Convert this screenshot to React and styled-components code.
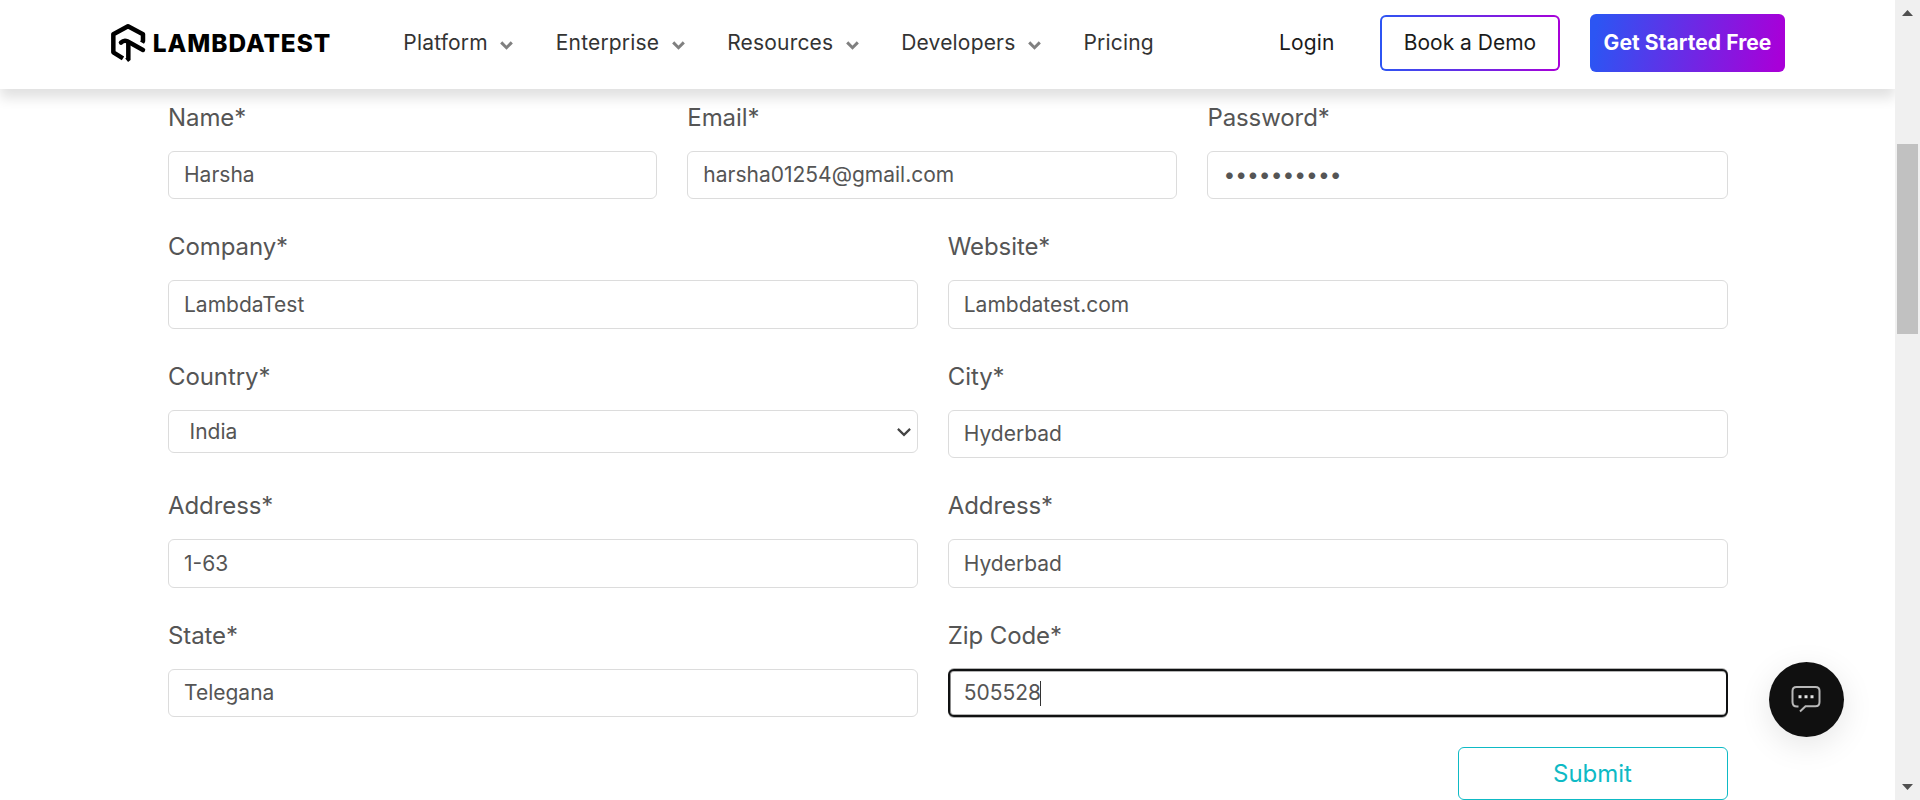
import React from 'react';
import styled, { createGlobalStyle, css } from 'styled-components';

const GlobalStyle = createGlobalStyle`
  *, *::before, *::after { box-sizing: border-box; }
  body { margin: 0; background: #fff; overflow: hidden; font-family: Inter, "Liberation Sans", sans-serif; }
`;

const Viewport = styled.div`
  display: flex;
  height: 800px;
  overflow: hidden;
`;

const Page = styled.div`
  flex: 1;
  min-width: 0;
  overflow: hidden;
  background: #fff;
`;

const Header = styled.header`
  position: relative;
  z-index: 2;
  display: flex;
  align-items: center;
  height: 89px;
  padding: 0 110px 3px 110px;
  background: #fff;
  box-shadow: 0 9px 12px rgba(0, 0, 0, 0.12);
`;

const Logo = styled.a`
  display: flex;
  align-items: center;
  width: 293.3px;
  color: #000;
`;

const LogoMark = styled.svg`
  width: 36.67px;
  height: 40px;
  flex: none;
`;

const LogoText = styled.span`
  margin-left: 6.2px;
  font-size: 24.4px;
  line-height: 30px;
  font-weight: 800;
  letter-spacing: 0.95px;
  margin-top: -1px;
`;

const Nav = styled.nav`
  display: flex;
  align-items: center;
  gap: 42.3px;
`;

const NavItem = styled.a`
  display: flex;
  align-items: center;
  gap: 12.7px;
  font-size: 21px;
  line-height: 30px;
  letter-spacing: 0.18px;
  color: #333;
`;

const NavChevron = styled.svg`
  width: 13px;
  height: 9px;
  margin-top: 4px;
`;

const Actions = styled.div`
  display: flex;
  align-items: center;
  margin-left: auto;
  font-size: 21px;
  line-height: 30px;
  color: #1b1b1b;
`;

const Login = styled.a`
  margin-right: 45.6px;
  letter-spacing: 0.1px;
`;

const DemoButton = styled.a`
  display: flex;
  align-items: center;
  justify-content: center;
  width: 180px;
  height: 56px;
  margin-right: 30px;
  border: 2px solid transparent;
  border-radius: 6px;
  background:
    linear-gradient(#fff, #fff) padding-box,
    linear-gradient(90deg, #2c55f3, #a800d8) border-box;
`;

const StartButton = styled.a`
  display: flex;
  align-items: center;
  justify-content: center;
  width: 195px;
  height: 58px;
  border-radius: 6px;
  background: linear-gradient(100deg, #2c55f3 4%, #a800d8 96%);
  color: #fff;
  font-weight: 700;
  letter-spacing: 0.06px;
  white-space: nowrap;
`;

const Form = styled.form`
  width: 1559.5px;
  margin: 10.75px 0 0 168px;
`;

const Row = styled.div`
  display: grid;
  grid-template-columns: ${(p) => (p.$columns === 3 ? '33.3% 33.35% 1fr' : '1fr 1fr')};
  height: 129.5px;
`;

const Field = styled.div`
  display: flex;
  flex-direction: column;
  padding-right: 30px;

  &:last-child { padding-right: 0; }
`;

const Label = styled.label`
  margin-bottom: 15px;
  font-size: 24px;
  line-height: 36px;
  font-weight: 400;
  letter-spacing: -0.09px;
  color: #555;
`;

const Control = styled.div`
  display: flex;
  align-items: center;
  height: 48.5px;
  padding: 0 15px;
  border: 1px solid #dcdcdc;
  border-radius: 6px;
  background: #fff;
  font-size: 21px;
  line-height: 30px;
  color: #555;

  ${(p) => p.$select && css`
    height: 43.5px;
    padding: 0 6px 0 20.5px;
    justify-content: space-between;
  `}

  ${(p) => p.$focused && css`
    padding: 0 14px;
    border: 2px solid #101112;
    box-shadow: 0 1px 0 #b4b4b4, 0 -1px 0 #b4b4b4, inset 0 1px 0 #b4b4b4, inset 0 -1px 0 #b4b4b4, inset 1px 0 0 #8c8c8c;
  `}
`;

const Caret = styled.span`
  width: 1px;
  height: 25px;
  margin-left: -1px;
  background: #333;
`;

const SelectArrow = styled.svg`
  width: 14px;
  height: 10px;
`;

const SubmitButton = styled.button`
  display: block;
  width: 270px;
  height: 52.75px;
  margin-left: auto;
  padding: 0;
  border: 1px solid #0ebac5;
  border-radius: 6px;
  background: #fff;
  font: 400 24px/36px Inter, "Liberation Sans", sans-serif;
  color: #0ebac5;
`;

const ChatButton = styled.button`
  position: fixed;
  left: 1769px;
  top: 662px;
  display: flex;
  align-items: center;
  justify-content: center;
  width: 75px;
  height: 75px;
  padding: 0 1px 2px 0;
  border: 0;
  border-radius: 50%;
  background: #101010;
  box-shadow: 0 8px 32px rgba(0, 0, 0, 0.1);
`;

const ChatIcon = styled.svg`
  width: 32px;
  height: 28px;
`;

const Scrollbar = styled.div`
  position: relative;
  z-index: 3;
  display: flex;
  flex-direction: column;
  align-items: center;
  width: 25px;
  height: 800px;
  padding: 10px 0;
  background: #f0f0f0;
`;

const ScrollArrow = styled.svg`
  width: 11px;
  height: 6px;
  flex: none;
`;

const Thumb = styled.div`
  width: 21px;
  height: 190px;
  margin: 128px 0 auto;
  background: #c1c1c1;
`;

const menu = [
  { label: 'Platform', open: true },
  { label: 'Enterprise', open: true },
  { label: 'Resources', open: true },
  { label: 'Developers', open: true },
  { label: 'Pricing' },
];

const rows = [
  [
    { label: 'Name*', value: 'Harsha' },
    { label: 'Email*', value: 'harsha01254@gmail.com' },
    { label: 'Password*', value: '••••••••••' },
  ],
  [
    { label: 'Company*', value: 'LambdaTest' },
    { label: 'Website*', value: 'Lambdatest.com' },
  ],
  [
    { label: 'Country*', value: 'India', select: true },
    { label: 'City*', value: 'Hyderbad' },
  ],
  [
    { label: 'Address*', value: '1-63' },
    { label: 'Address*', value: 'Hyderbad' },
  ],
  [
    { label: 'State*', value: 'Telegana' },
    { label: 'Zip Code*', value: '505528', focused: true },
  ],
];

export default function App() {
  return (
    <>
      <GlobalStyle />
      <Viewport>
        <Page>
          <Header>
            <Logo>
              <LogoMark viewBox="30 40 110 120" fill="none" stroke="#000" strokeWidth="13.5">
                <path d="M69 146 L40 128 V74 L84 49.5 L129 74 V94 L126 99" strokeLinejoin="round" />
                <path d="M63 99 Q72 90 82 95 L129 121" strokeLinecap="round" strokeLinejoin="round" />
                <path d="M85 97 V148 L80 152" strokeLinecap="butt" />
              </LogoMark>
              <LogoText>LAMBDATEST</LogoText>
            </Logo>
            <Nav>
              {menu.map((item) => (
                <NavItem key={item.label}>
                  {item.label}
                  {item.open && (
                    <NavChevron viewBox="0 0 13 9" fill="none" stroke="#808080" strokeWidth="3">
                      <path d="M1.2 1.4 L6.5 6.7 L11.8 1.4" />
                    </NavChevron>
                  )}
                </NavItem>
              ))}
            </Nav>
            <Actions>
              <Login>Login</Login>
              <DemoButton>Book a Demo</DemoButton>
              <StartButton>Get Started Free</StartButton>
            </Actions>
          </Header>
          <Form>
            {rows.map((fields, i) => (
              <Row key={i} $columns={fields.length}>
                {fields.map((f, j) => (
                  <Field key={j}>
                    <Label>{f.label}</Label>
                    <Control $select={f.select} $focused={f.focused}>
                      {f.value}
                      {f.focused && <Caret />}
                      {f.select && (
                        <SelectArrow viewBox="0 0 14 10" fill="none" stroke="#444" strokeWidth="2.2">
                          <path d="M0.9 1.9 L7 7.9 L13.1 1.9" />
                        </SelectArrow>
                      )}
                    </Control>
                  </Field>
                ))}
              </Row>
            ))}
            <SubmitButton type="button">Submit</SubmitButton>
          </Form>
        </Page>
        <Scrollbar>
          <ScrollArrow viewBox="0 0 11 6"><path d="M5.5 0 L11 6 H0 Z" fill="#505050" /></ScrollArrow>
          <Thumb />
          <ScrollArrow viewBox="0 0 11 6"><path d="M0 0 H11 L5.5 6 Z" fill="#505050" /></ScrollArrow>
        </Scrollbar>
      </Viewport>
      <ChatButton aria-label="Chat">
        <ChatIcon viewBox="0 0 32 28" fill="none" stroke="#b8b8b8" strokeWidth="2">
          <path d="M8.5 21.5 H7 Q2.5 21.5 2.5 17 V6 Q2.5 2 6.5 2 H25.5 Q29.5 2 29.5 6 V17 Q29.5 21.3 25.5 21.3 H15.5 L10 26.5" />
          <path d="M8.5 11.7 h3 M14.5 11.7 h3 M20.5 11.7 h3" stroke="#e4e4e4" strokeWidth="3" />
        </ChatIcon>
      </ChatButton>
    </>
  );
}
